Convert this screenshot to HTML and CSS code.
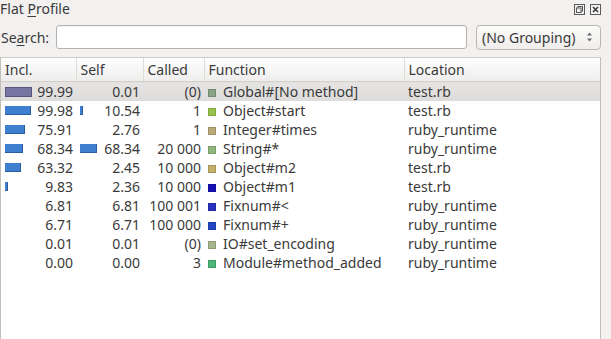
FILE: index.html
```html
<!DOCTYPE html>
<html>
<head>
<meta charset="utf-8">
<link rel="stylesheet" href="styles.css">
</head>
<body>
<div class="dock">
  <div class="titlebar">
    <span class="title">Flat <u>P</u>rofile</span>
    <span class="tb-icons">
      <svg class="tbi" width="11" height="11" viewBox="0 0 11 11"><rect x="0.5" y="0.5" width="10" height="10" fill="none" stroke="#5a5a5a"/><rect x="4" y="2.5" width="4.5" height="4.5" fill="none" stroke="#5a5a5a"/><rect x="2.5" y="4" width="4.5" height="4.5" fill="#f2f1f0" stroke="#5a5a5a"/></svg>
      <svg class="tbi" width="11" height="11" viewBox="0 0 11 11"><rect x="0.5" y="0.5" width="10" height="10" fill="none" stroke="#5a5a5a"/><path d="M3 3 L8 8 M8 3 L3 8" stroke="#3a3a3a" stroke-width="1.6"/></svg>
    </span>
  </div>
  <div class="searchrow">
    <label class="slabel">Se<u>a</u>rch:</label>
    <div class="sinput"></div>
    <div class="combo"><span>(No Grouping)</span>
      <svg width="7" height="12" viewBox="0 0 7 12"><path d="M1 4.5 L3.5 1.5 L6 4.5Z M1 7.5 L3.5 10.5 L6 7.5Z" fill="#6a6a6a"/></svg>
    </div>
  </div>
  <div class="tablewrap">
    <table class="grid">
      <colgroup><col class="c1"><col class="c2"><col class="c3"><col class="c4"><col class="c5"></colgroup>
      <thead>
        <tr><th>Incl.</th><th>Self</th><th>Called</th><th>Function</th><th>Location</th></tr>
      </thead>
      <tbody>
        <tr class="sel">
          <td class="num"><span class="bar gray" style="width:25px"></span>99.99</td>
          <td class="num">0.01</td>
          <td class="num">(0)</td>
          <td><span class="sq" style="background:#8aa284"></span>Global#[No method]</td>
          <td>test.rb</td>
        </tr>
        <tr>
          <td class="num"><span class="bar" style="width:25px"></span>99.98</td>
          <td class="num"><span class="bar" style="width:2px"></span>10.54</td>
          <td class="num">1</td>
          <td><span class="sq" style="background:#9ac24e"></span>Object#start</td>
          <td>test.rb</td>
        </tr>
        <tr>
          <td class="num"><span class="bar" style="width:19px"></span>75.91</td>
          <td class="num">2.76</td>
          <td class="num">1</td>
          <td><span class="sq" style="background:#bca978"></span>Integer#times</td>
          <td>ruby_runtime</td>
        </tr>
        <tr>
          <td class="num"><span class="bar" style="width:17px"></span>68.34</td>
          <td class="num"><span class="bar" style="width:16px"></span>68.34</td>
          <td class="num">20 000</td>
          <td><span class="sq" style="background:#90b87e"></span>String#*</td>
          <td>ruby_runtime</td>
        </tr>
        <tr>
          <td class="num"><span class="bar" style="width:15px"></span>63.32</td>
          <td class="num">2.45</td>
          <td class="num">10 000</td>
          <td><span class="sq" style="background:#c4b06a"></span>Object#m2</td>
          <td>test.rb</td>
        </tr>
        <tr>
          <td class="num"><span class="bar" style="width:2px"></span>9.83</td>
          <td class="num">2.36</td>
          <td class="num">10 000</td>
          <td><span class="sq" style="background:#1410b8"></span>Object#m1</td>
          <td>test.rb</td>
        </tr>
        <tr>
          <td class="num">6.81</td>
          <td class="num">6.81</td>
          <td class="num">100 001</td>
          <td><span class="sq" style="background:#2a30c0"></span>Fixnum#&lt;</td>
          <td>ruby_runtime</td>
        </tr>
        <tr>
          <td class="num">6.71</td>
          <td class="num">6.71</td>
          <td class="num">100 000</td>
          <td><span class="sq" style="background:#2448c4"></span>Fixnum#+</td>
          <td>ruby_runtime</td>
        </tr>
        <tr>
          <td class="num">0.01</td>
          <td class="num">0.01</td>
          <td class="num">(0)</td>
          <td><span class="sq" style="background:#a6b88a"></span>IO#set_encoding</td>
          <td>ruby_runtime</td>
        </tr>
        <tr>
          <td class="num">0.00</td>
          <td class="num">0.00</td>
          <td class="num">3</td>
          <td><span class="sq" style="background:#4cb878"></span>Module#method_added</td>
          <td>ruby_runtime</td>
        </tr>
      </tbody>
    </table>
  </div>
</div>
</body>
</html>
```
FILE: styles.css
```css
html, body {
  margin: 0;
  padding: 0;
  height: 100%;
}
body {
  background: #f2f1f0;
  font-family: "Noto Sans", "Open Sans", sans-serif;
  font-size: 14px;
  color: #3a3a3a;
  overflow: hidden;
}
.dock {
  display: flex;
  flex-direction: column;
  height: 339px;
  width: 611px;
}
.titlebar {
  height: 19px;
  display: flex;
  align-items: center;
  justify-content: space-between;
  padding-right: 10px;
}
.title {
  line-height: 17px;
  margin-top: -2px;
}
u { text-decoration-thickness: 1px; text-underline-offset: 2px; }
.tb-icons {
  display: flex;
  gap: 5px;
  margin-top: -1px;
}
.tbi { display: block; }
.searchrow {
  display: flex;
  align-items: center;
  height: 26px;
  margin-top: 5px;
  padding-left: 1px;
}
.slabel {
  width: 55px;
}
.sinput {
  width: 409px;
  height: 22px;
  background: #fff;
  border: 1px solid #b5b2ad;
  border-radius: 3px;
  box-shadow: inset 0 1px 1px rgba(0,0,0,0.06);
}
.combo {
  margin-left: 9px;
  height: 23px;
  border: 1px solid #b9b6b1;
  border-radius: 4px;
  background: linear-gradient(#fbfbfa, #efeeed);
  display: flex;
  align-items: center;
  justify-content: space-between;
  padding: 0 7px 0 5px;
  box-sizing: content-box;
  width: 111px;
  color: #3a3a3a;
}
.tablewrap {
  margin-top: 7px;
  flex: 1;
  width: 601px;
  background: #fff;
  border-left: 1px solid #c2beb8;
  border-right: 1px solid #c2beb8;
  box-sizing: border-box;
  border-top: 1px solid #cfccc8;
}
.grid {
  border-collapse: collapse;
  table-layout: fixed;
  width: 599px;
}
.c1 { width: 75px; }
.c2 { width: 67px; }
.c3 { width: 61px; }
.c4 { width: 200px; }
.c5 { width: 196px; }
th {
  height: 23px;
  padding: 0 0 0 4px;
  text-align: left;
  font-weight: normal;
  background: linear-gradient(#ffffff, #eeedec);
  border-bottom: 1px solid #d4d1cd;
  border-right: 1px solid #dedcd8;
  white-space: nowrap;
}
th:last-child { border-right: none; }
td {
  height: 19px;
  padding: 0 0 0 4px;
  white-space: nowrap;
  line-height: 17px;
}
td.num {
  text-align: right;
  padding: 0 3px 0 4px;
  position: relative;
}
tr.sel td {
  background: linear-gradient(#e6e5e4, #dcdbda);
}
.bar {
  position: absolute;
  left: 4px;
  top: 5px;
  height: 8px;
  background: #3f7fd0;
  border: 1px solid #2c5d9e;
  border-width: 0 1px 1px 0;
}
.bar.gray {
  background: #7676a2;
  border: 1px solid #56567a;
}
.sq {
  display: inline-block;
  width: 8px;
  height: 8px;
  margin: 0 7px 0 0;
  vertical-align: 0px;
  box-shadow: inset 0 0 0 1px rgba(0,0,0,0.15);
}
```
